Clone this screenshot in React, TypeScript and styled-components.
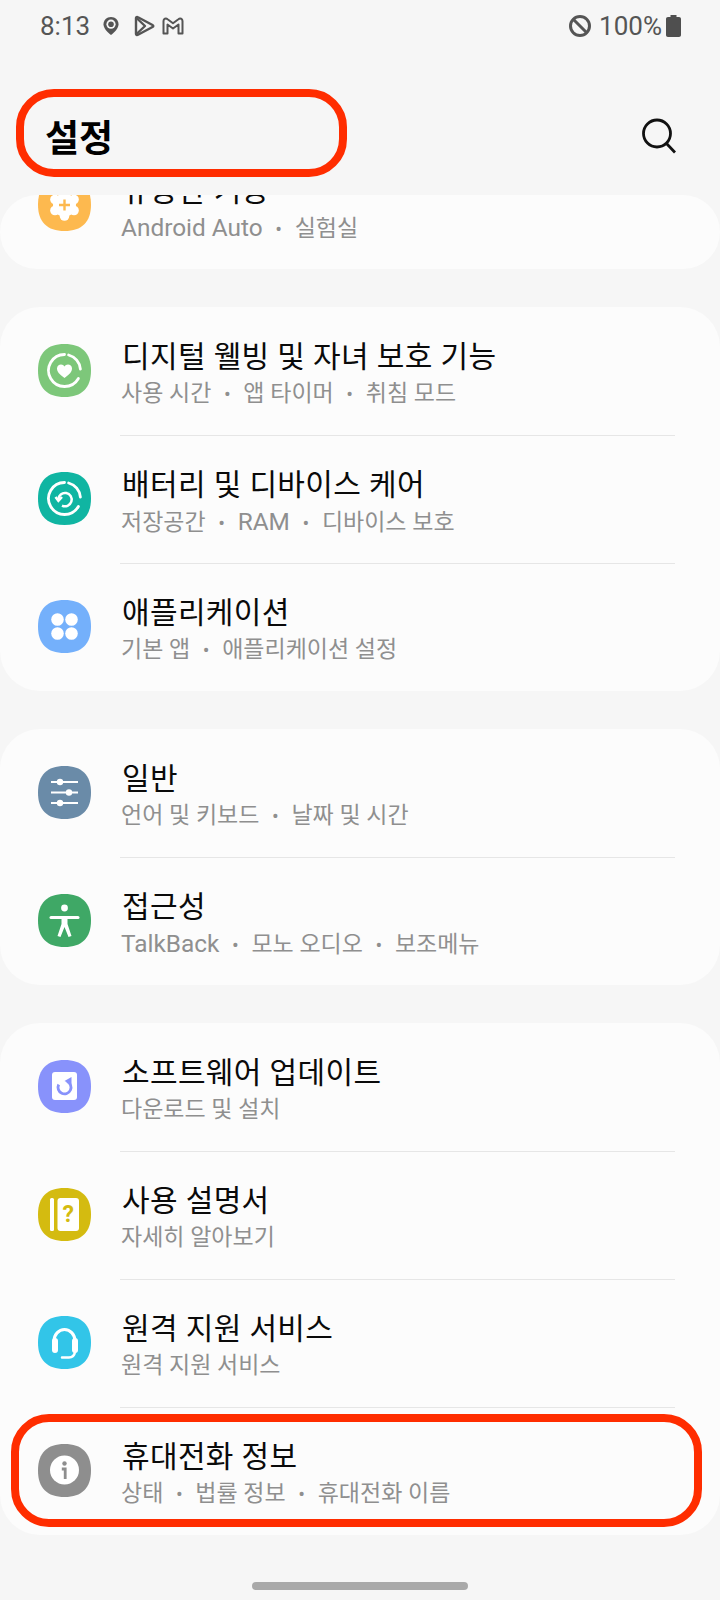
import React from 'react'
import styled, { createGlobalStyle } from 'styled-components'

const GlobalStyle = createGlobalStyle`
  html, body {
    margin: 0;
    padding: 0;
    background: #f6f6f6;
  }
`

const Page = styled.div`
  position: relative;
  width: 720px;
  height: 1600px;
  overflow: hidden;
  background: #f6f6f6;
  font-family: Roboto, "Noto Sans CJK KR", sans-serif;
`

const StatusBar = styled.div`
  height: 52px;
  padding: 0 39px 0 40px;
  box-sizing: border-box;
  display: flex;
  align-items: center;
  justify-content: space-between;
  color: #555;
  font-size: 26px;
`

const StatusGroup = styled.div`
  display: flex;
  align-items: center;
`

const Clock = styled.span`
  margin-right: 12px;
`

const Percent = styled.span`
  margin: 0 4px 0 7px;
`

const StatusIcon = styled.svg<{ $gap: number }>`
  display: block;
  margin-right: ${(props) => props.$gap}px;
`

const Header = styled.div`
  height: 143px;
  padding: 24px 44px 0 45px;
  box-sizing: border-box;
  display: flex;
  align-items: center;
  justify-content: space-between;
`

const Title = styled.h1`
  margin: 0;
  font-size: 37px;
  font-weight: 700;
  color: #000;
`

const List = styled.div`
  display: flex;
  flex-direction: column;
  gap: 38px;
`

const Card = styled.div`
  background: #fcfcfc;
  border-radius: 40px;
  overflow: hidden;
`

const ClippedCard = styled(Card)`
  height: 74px;
  border-radius: 37px;
`

const Row = styled.div`
  height: 128px;
  box-sizing: border-box;
  padding: 32px 0 0 38px;
  display: flex;
  align-items: flex-start;
  gap: 31px;
`

const ClippedRow = styled(Row)`
  margin-top: -54px;
`

const Divider = styled.div`
  height: 1px;
  margin: 0 45px -1px 120px;
  background: #e6e6e6;
`

const Badge = styled.svg<{ $bg: string }>`
  display: block;
  flex: none;
  width: 53px;
  height: 53px;
  margin-top: 5px;
  color: ${(props) => props.$bg};
`

const RowText = styled.div`
  min-width: 0;
`

const RowTitle = styled.div`
  font-size: 30px;
  line-height: 36px;
  letter-spacing: 0.35px;
  color: #0a0a0a;
  white-space: nowrap;
`

const RowSub = styled.div`
  margin-left: -1px;
  font-size: 23px;
  line-height: 37px;
  color: #8f8f8f;
  white-space: nowrap;
`

const Latin = styled.span`
  font-size: 24.4px;
`

const Dot = styled.span`
  display: inline-block;
  width: 32px;
  text-align: center;
  font-size: 20px;
`

const HomeBar = styled.div`
  width: 216px;
  height: 8px;
  margin: 47px auto 0;
  border-radius: 4px;
  background: #a9a9a9;
`

const Mark = styled.div`
  position: absolute;
  box-sizing: border-box;
  border: 8px solid #ff2d00;
  border-radius: 38px;
`

const TitleMark = styled(Mark)`
  left: 16px;
  top: 89px;
  width: 331px;
  height: 88px;
`

const AboutMark = styled(Mark)`
  left: 11px;
  top: 1414px;
  width: 691px;
  height: 113px;
`

const W = '#fff'

const Rings = () => (
  <g fill="none" stroke={W} strokeWidth="2.8" strokeLinecap="round">
    <path d="M26.5 10.5A16 16 0 1 0 40.4 34.5" />
    <path d="M30.6 11A16 16 0 0 1 42.4 25.1" />
  </g>
)

const glyphs: Record<string, React.ReactNode> = {
  gear: (
    <g>
      <circle cx="26.5" cy="27" r="11.5" fill={W} />
      {[0, 60, 120, 180, 240, 300].map((a) => (
        <circle
          key={a}
          cx={26.5 + 11 * Math.sin((a * Math.PI) / 180)}
          cy={27 - 11 * Math.cos((a * Math.PI) / 180)}
          r="4.8"
          fill={W}
        />
      ))}
      <path d="M26.5 21.5V32.5M21 27H32" stroke="currentColor" strokeWidth="2.4" />
    </g>
  ),
  heart: (
    <g>
      <Rings />
      <path
        d="M26.5 34C21 30 19 27.5 19 24.5C19 22 21 20.5 23 20.5C24.5 20.5 25.8 21.2 26.5 22.5C27.2 21.2 28.5 20.5 30 20.5C32 20.5 34 22 34 24.5C34 27.5 32 30 26.5 34Z"
        fill={W}
      />
    </g>
  ),
  care: (
    <g fill="none" stroke={W}>
      <Rings />
      <path d="M20.3 27.4A6.7 6.7 0 1 1 24 33.6" strokeWidth="2.5" />
      <path d="M17.5 25L20.4 28.8L24 25" strokeWidth="2.5" />
    </g>
  ),
  apps: (
    <g fill={W}>
      <circle cx="19.5" cy="19.5" r="6.3" />
      <circle cx="33.5" cy="19.5" r="6.3" />
      <circle cx="19.5" cy="33.5" r="6.3" />
      <circle cx="33.5" cy="33.5" r="6.3" />
    </g>
  ),
  sliders: (
    <g>
      <path d="M13 16H40M13 26.5H40M13 37H40" stroke={W} strokeWidth="2" />
      <circle cx="22" cy="16" r="3.2" fill={W} />
      <circle cx="31" cy="26.5" r="3.2" fill={W} />
      <circle cx="22" cy="37" r="3.2" fill={W} />
    </g>
  ),
  person: (
    <g fill={W}>
      <circle cx="26.5" cy="14" r="3.4" />
      <path d="M13 23.5H40" stroke={W} strokeWidth="3" strokeLinecap="round" />
      <path d="M23.5 23L29.5 23L29.5 30L33.5 42L30.5 43L26.5 33L22.5 43L19.5 42L23.5 30Z" />
    </g>
  ),
  update: (
    <g>
      <rect x="14" y="12" width="25" height="28" rx="3" fill={W} />
      <path
        d="M20.7 24.5A6.5 6.5 0 1 0 29 21.4"
        fill="none"
        stroke="currentColor"
        strokeWidth="2.8"
      />
      <path d="M26.5 21L33.5 17V24.5Z" fill="currentColor" />
    </g>
  ),
  manual: (
    <g>
      <rect x="12" y="10" width="4" height="33" rx="1.5" fill={W} />
      <rect x="19.5" y="10" width="21.5" height="33" rx="3" fill={W} />
      <text
        x="30.2"
        y="34"
        textAnchor="middle"
        fontSize="23"
        fontWeight="700"
        fontFamily="Roboto, sans-serif"
        fill="currentColor"
      >
        ?
      </text>
    </g>
  ),
  headset: (
    <g>
      <path d="M16 25A10.5 11.5 0 0 1 37 25" fill="none" stroke={W} strokeWidth="3" />
      <rect x="14" y="22" width="6" height="15" rx="3" fill={W} />
      <rect x="34" y="22" width="6" height="15" rx="3" fill={W} />
      <path
        d="M37 36Q36 41.5 31 41.5H24"
        fill="none"
        stroke={W}
        strokeWidth="2.5"
        strokeLinecap="round"
      />
    </g>
  ),
  info: (
    <g>
      <circle cx="26.5" cy="26" r="14.5" fill={W} />
      <circle cx="26.5" cy="19.5" r="2.2" fill="currentColor" />
      <path d="M23.8 25H27.2V35" fill="none" stroke="currentColor" strokeWidth="2.8" />
    </g>
  ),
}

const Icon = ({ name, bg }: { name: string; bg: string }) => (
  <Badge $bg={bg} viewBox="0 0 53 53">
    <path
      d="M26.5 0C44 0 53 9 53 26.5C53 44 44 53 26.5 53C9 53 0 44 0 26.5C0 9 9 0 26.5 0Z"
      fill="currentColor"
    />
    {glyphs[name]}
  </Badge>
)

type Item = { icon: string; bg: string; title: string; sub: string[] }

const Sub = ({ items }: { items: string[] }) => (
  <RowSub>
    {items.map((text, i) => (
      <React.Fragment key={text}>
        {i > 0 && <Dot>•</Dot>}
        {/^[A-Za-z ]+$/.test(text) ? <Latin>{text}</Latin> : text}
      </React.Fragment>
    ))}
  </RowSub>
)

const RowBody = ({ item }: { item: Item }) => (
  <>
    <Icon name={item.icon} bg={item.bg} />
    <RowText>
      <RowTitle>{item.title}</RowTitle>
      <Sub items={item.sub} />
    </RowText>
  </>
)

const clipped: Item = {
  icon: 'gear',
  bg: '#fdb94f',
  title: '유용한 기능',
  sub: ['Android Auto', '실험실'],
}

const groups: Item[][] = [
  [
    { icon: 'heart', bg: '#7dc77a', title: '디지털 웰빙 및 자녀 보호 기능', sub: ['사용 시간', '앱 타이머', '취침 모드'] },
    { icon: 'care', bg: '#10b5a2', title: '배터리 및 디바이스 케어', sub: ['저장공간', 'RAM', '디바이스 보호'] },
    { icon: 'apps', bg: '#74b0fb', title: '애플리케이션', sub: ['기본 앱', '애플리케이션 설정'] },
  ],
  [
    { icon: 'sliders', bg: '#6a8ba8', title: '일반', sub: ['언어 및 키보드', '날짜 및 시간'] },
    { icon: 'person', bg: '#3fa866', title: '접근성', sub: ['TalkBack', '모노 오디오', '보조메뉴'] },
  ],
  [
    { icon: 'update', bg: '#8892fb', title: '소프트웨어 업데이트', sub: ['다운로드 및 설치'] },
    { icon: 'manual', bg: '#d4bb10', title: '사용 설명서', sub: ['자세히 알아보기'] },
    { icon: 'headset', bg: '#32c5e8', title: '원격 지원 서비스', sub: ['원격 지원 서비스'] },
    { icon: 'info', bg: '#8e8e8e', title: '휴대전화 정보', sub: ['상태', '법률 정보', '휴대전화 이름'] },
  ],
]

export default function App() {
  return (
    <Page>
      <GlobalStyle />
      <StatusBar>
        <StatusGroup>
          <Clock>8:13</Clock>
          <StatusIcon $gap={13} width="18" height="20" viewBox="0 0 18 20">
            <path d="M9 1C4.6 1 1.5 4.2 1.5 8.2C1.5 12 5.5 16.5 9 19C12.5 16.5 16.5 12 16.5 8.2C16.5 4.2 13.4 1 9 1Z" fill="#555" />
            <circle cx="9" cy="8.2" r="4.6" fill="#f6f6f6" />
            <circle cx="9" cy="8.2" r="2.8" fill="#555" />
          </StatusIcon>
          <StatusIcon $gap={7} width="22" height="22" viewBox="0 0 22 22" fill="none" stroke="#555" strokeWidth="2.4" strokeLinejoin="round">
            <path d="M3 3C3 2 4 1.6 5 2.2L19.5 10C20.6 10.6 20.6 11.4 19.5 12L5 19.8C4 20.4 3 20 3 19Z" />
            <path d="M3.5 3L12 11L3.5 19" />
          </StatusIcon>
          <StatusIcon $gap={0} width="22" height="18" viewBox="0 0 22 18" fill="none" stroke="#555" strokeWidth="2" strokeLinejoin="round">
            <path d="M1.5 16.5V4C1.5 1.8 3.8 0.8 5.6 2.2L11 6.2L16.4 2.2C18.2 0.8 20.5 1.8 20.5 4V16.5H16.5V7.5L11 11.5L5.5 7.5V16.5Z" />
          </StatusIcon>
        </StatusGroup>
        <StatusGroup>
          <svg width="24" height="24" viewBox="0 0 24 24" fill="none" stroke="#555" strokeWidth="3">
            <circle cx="12" cy="12" r="9.5" />
            <path d="M5.5 5.5L18.5 18.5" />
          </svg>
          <Percent>100%</Percent>
          <svg width="15" height="22" viewBox="0 0 15 22" fill="#4f4f4f">
            <path d="M4.5 0H10.5V2H13C14.2 2 15 2.8 15 4V20C15 21.2 14.2 22 13 22H2C0.8 22 0 21.2 0 20V4C0 2.8 0.8 2 2 2H4.5Z" />
          </svg>
        </StatusGroup>
      </StatusBar>
      <Header>
        <Title>설정</Title>
        <svg width="36" height="36" viewBox="0 0 36 36" fill="none" stroke="#111" strokeWidth="2.8">
          <circle cx="17" cy="15.5" r="13.5" />
          <path d="M26.5 25.5L35 34.5" />
        </svg>
      </Header>
      <List>
        <ClippedCard>
          <ClippedRow>
            <RowBody item={clipped} />
          </ClippedRow>
        </ClippedCard>
        {groups.map((group) => (
          <Card key={group[0].title}>
            {group.map((item, i) => (
              <React.Fragment key={item.title}>
                {i > 0 && <Divider />}
                <Row>
                  <RowBody item={item} />
                </Row>
              </React.Fragment>
            ))}
          </Card>
        ))}
      </List>
      <HomeBar />
      <TitleMark />
      <AboutMark />
    </Page>
  )
}
